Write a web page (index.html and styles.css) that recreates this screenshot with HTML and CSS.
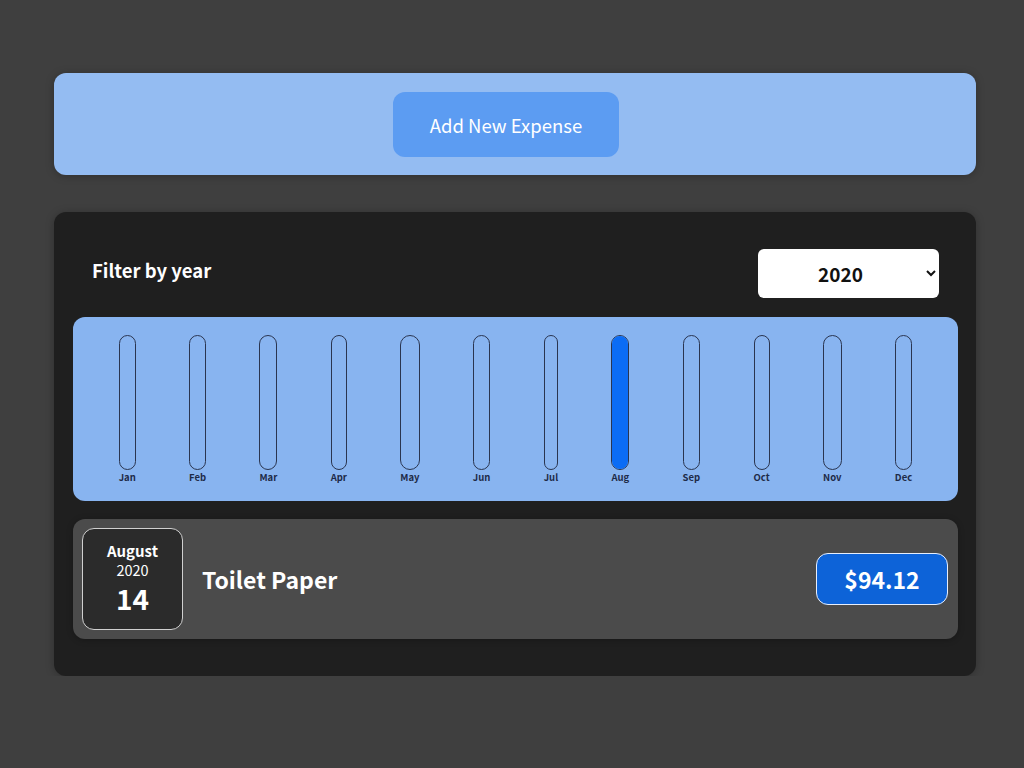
FILE: index.html
```html
<!DOCTYPE html>
<html lang="en">
<head>
<meta charset="utf-8">
<title>Expenses</title>
<link rel="stylesheet" href="styles.css">
</head>
<body>
<div class="root">
  <div class="new-expense">
    <button class="add-btn">Add New Expense</button>
  </div>

  <div class="expenses">
    <div class="filter">
      <label class="filter-label">Filter by year</label>
      <select class="filter-select">
        <option>2022</option>
        <option>2021</option>
        <option selected>2020</option>
        <option>2019</option>
      </select>
    </div>

    <div class="chart">
      <div class="bar"><div class="bar-inner"></div><div class="bar-label">Jan</div></div>
      <div class="bar"><div class="bar-inner"></div><div class="bar-label">Feb</div></div>
      <div class="bar"><div class="bar-inner"></div><div class="bar-label">Mar</div></div>
      <div class="bar"><div class="bar-inner"></div><div class="bar-label">Apr</div></div>
      <div class="bar"><div class="bar-inner"></div><div class="bar-label">May</div></div>
      <div class="bar"><div class="bar-inner"></div><div class="bar-label">Jun</div></div>
      <div class="bar"><div class="bar-inner"></div><div class="bar-label">Jul</div></div>
      <div class="bar"><div class="bar-inner"><div class="bar-fill" style="height:100%"></div></div><div class="bar-label">Aug</div></div>
      <div class="bar"><div class="bar-inner"></div><div class="bar-label">Sep</div></div>
      <div class="bar"><div class="bar-inner"></div><div class="bar-label">Oct</div></div>
      <div class="bar"><div class="bar-inner"></div><div class="bar-label">Nov</div></div>
      <div class="bar"><div class="bar-inner"></div><div class="bar-label">Dec</div></div>
    </div>

    <ul class="list">
      <li class="item">
        <div class="date">
          <div class="date-month">August</div>
          <div class="date-year">2020</div>
          <div class="date-day">14</div>
        </div>
        <div class="desc">
          <h2 class="title">Toilet Paper</h2>
          <div class="price">$94.12</div>
        </div>
      </li>
    </ul>
  </div>
</div>
</body>
</html>
```
FILE: styles.css
```css
* {
  box-sizing: border-box;
}

html, body {
  margin: 0;
  padding: 0;
}

body {
  background: #3f3f3f;
  font-family: "Noto Sans CJK JP", "Noto Sans", sans-serif;
  color: #fff;
}

.root {
  padding: 73px 0 0 6px;
}

.new-expense {
  width: 922px;
  margin: 0 auto 37px;
  background: #94bcf2;
  border-radius: 12px;
  padding: 19px 0 18px;
  display: flex;
  justify-content: center;
  box-shadow: 0 1px 8px rgba(0, 0, 0, 0.25);
}

.add-btn {
  font-family: inherit;
  font-size: 18.5px;
  color: #fff;
  background: #5c9cf2;
  border: none;
  border-radius: 12px;
  width: 226px;
  height: 65px;
  margin-right: 18px;
  cursor: pointer;
}

.expenses {
  width: 922px;
  margin: 0 auto;
  background: #1f1f1f;
  border-radius: 12px;
  padding: 18px 18px 37px 19px;
  box-shadow: 0 1px 8px rgba(0, 0, 0, 0.25);
}

.filter {
  display: flex;
  justify-content: space-between;
  align-items: center;
  padding: 19px;
}

.filter-label {
  font-weight: bold;
  font-size: 18.5px;
  margin-top: -8px;
}

.filter-select {
  width: 181px;
  height: 49px;
  border: none;
  border-radius: 6px;
  background: #fff;
  color: #111;
  font-family: inherit;
  font-weight: bold;
  font-size: 19px;
  text-align: center;
  padding: 0 10px 0 6px;
}

.chart {
  display: flex;
  justify-content: space-around;
  background: #88b4f0;
  border-radius: 12px;
  padding: 18px 19px 16px;
  height: 184px;
}

.bar {
  display: flex;
  flex-direction: column;
  align-items: center;
  height: 100%;
}

.bar-inner {
  flex: 1;
  width: 100%;
  border: 1px solid #2a3550;
  border-radius: 12px;
  overflow: hidden;
  display: flex;
  flex-direction: column;
  justify-content: flex-end;
}

.bar-fill {
  background: #0b6cf5;
  width: 100%;
}

.bar-label {
  font-weight: bold;
  font-size: 9.5px;
  color: #1e2b48;
  line-height: 15px;
}

.list {
  list-style: none;
  margin: 18px 0 0;
  padding: 0;
}

.item {
  display: flex;
  align-items: center;
  background: #4b4b4b;
  border-radius: 12px;
  padding: 9px 10px 9px 9px;
  box-shadow: 0 1px 6px rgba(0, 0, 0, 0.25);
}

.date {
  width: 101px;
  height: 102px;
  background: #2b2b2b;
  border: 1px solid #d0d0d0;
  border-radius: 12px;
  display: flex;
  flex-direction: column;
  align-items: center;
  justify-content: center;
  color: #fff;
  padding-bottom: 2px;
}

.date-month {
  font-size: 15px;
  font-weight: bold;
  line-height: 19px;
}

.date-year {
  font-size: 14.5px;
  line-height: 20px;
}

.date-day {
  font-size: 28px;
  font-weight: bold;
  line-height: 34px;
  margin-top: 1px;
}

.desc {
  flex: 1;
  display: flex;
  align-items: center;
  justify-content: space-between;
  margin-left: 19px;
}

.title {
  margin: 0;
  font-size: 23px;
  font-weight: bold;
  color: #fff;
}

.price {
  width: 132px;
  height: 52px;
  display: flex;
  align-items: center;
  justify-content: center;
  background: #0d63d8;
  border: 1px solid #e6eefc;
  border-radius: 12px;
  font-size: 23px;
  font-weight: bold;
  color: #fff;
}
```
